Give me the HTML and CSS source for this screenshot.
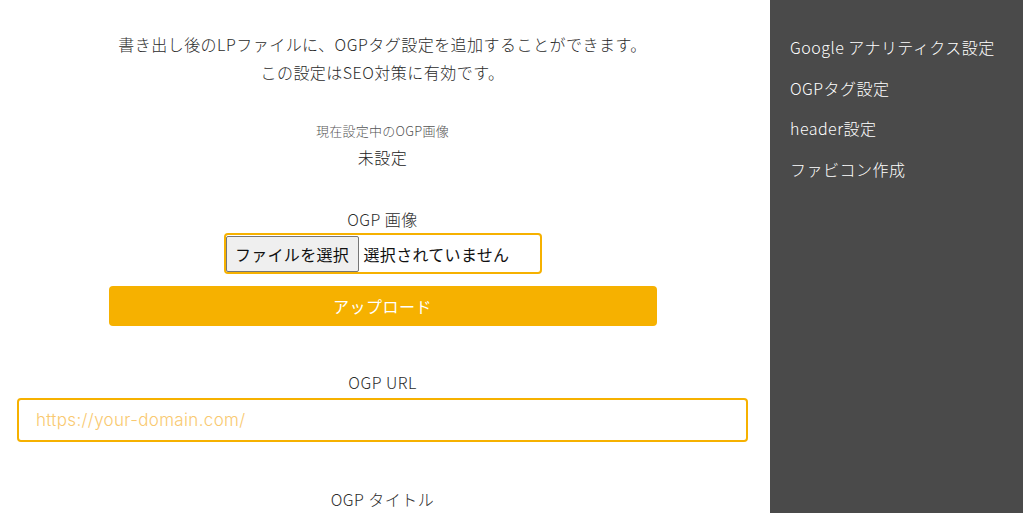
FILE: index.html
```html
<!DOCTYPE html>
<html lang="ja">
<head>
<meta charset="utf-8">
<link rel="stylesheet" href="styles.css">
</head>
<body>
<div class="page">
  <main class="main">
    <p class="intro">書き出し後のLPファイルに、OGPタグ設定を追加することができます。<br>この設定はSEO対策に有効です。</p>
    <div class="current">
      <div class="current-label">現在設定中のOGP画像</div>
      <div class="current-value">未設定</div>
    </div>
    <div class="field field-image">
      <div class="label">OGP 画像</div>
      <div class="file-box">
        <button class="file-btn" type="button">ファイルを選択</button>
        <span class="file-name">選択されていません</span>
      </div>
      <button class="upload" type="button">アップロード</button>
    </div>
    <div class="field field-url">
      <div class="label">OGP URL</div>
      <input class="text-input" type="text" placeholder="https://your-domain.com/">
    </div>
    <div class="field field-title">
      <div class="label">OGP タイトル</div>
    </div>
  </main>
  <aside class="side">
    <a class="side-item">Google アナリティクス設定</a>
    <a class="side-item">OGPタグ設定</a>
    <a class="side-item">header設定</a>
    <a class="side-item">ファビコン作成</a>
  </aside>
</div>
</body>
</html>
```
FILE: styles.css
```css
* { box-sizing: border-box; }
html, body { margin: 0; height: 100%; overflow: hidden; }
body {
  font-family: "Noto Sans CJK JP", "Noto Sans", sans-serif;
  font-weight: 300;
  color: #333;
  background: #fff;
  letter-spacing: 0.03em;
}
.page { display: flex; height: 513px; }
.main {
  width: 770px;
  padding: 0 22px 0 17px;
  display: flex;
  flex-direction: column;
  align-items: center;
  text-align: center;
}
.intro {
  margin: 30px 0 0;
  font-size: 16px;
  line-height: 28px;
  color: #2b2b2b;
}
.current { margin-top: 36px; }
.current-label { font-size: 13px; color: #555; line-height: 18px; letter-spacing: 0.02em; }
.current-value { font-size: 16px; line-height: 22px; margin-top: 6px; color: #222; }
.field { width: 100%; display: flex; flex-direction: column; align-items: center; }
.field-image { margin-top: 40px; }
.label { font-size: 16px; line-height: 22px; color: #2b2b2b; }
.file-box {
  margin-top: 3px;
  width: 318px;
  height: 41px;
  border: 2px solid #f6b100;
  border-radius: 4px;
  display: flex;
  align-items: center;
  text-align: left;
}
.file-btn {
  font-family: "Noto Sans CJK JP", sans-serif;
  font-weight: 400;
  font-size: 16px;
  letter-spacing: 0.02em;
  height: 36px;
  width: 133px;
  padding: 0;
  margin: 0;
  background: #efefef;
  border: 1px solid #767676;
  border-radius: 2px;
  color: #111;
}
.file-name { font-size: 16px; font-weight: 400; color: #111; margin-left: 5px; letter-spacing: 0.02em; }
.upload {
  margin-top: 12px;
  width: 548px;
  height: 40px;
  border: none;
  border-radius: 4px;
  background: #f6b100;
  color: #fff;
  font-family: "Noto Sans CJK JP", sans-serif;
  font-weight: 400;
  font-size: 16px;
  letter-spacing: 0.03em;
}
.field-url { margin-top: 45px; }
.text-input {
  margin-top: 5px;
  width: 100%;
  height: 44px;
  border: 2px solid #f6b100;
  border-radius: 4px;
  padding: 0 17px;
  font-family: Inter, "Noto Sans CJK JP", sans-serif;
  font-weight: 300;
  font-size: 17px;
  letter-spacing: 0.02em;
  outline: none;
}
.text-input::placeholder { color: #f9c970; }
.field-title { margin-top: 46px; }
.side {
  width: 253px;
  background: #4a4a4a;
  padding: 36px 0 0 20px;
  display: flex;
  flex-direction: column;
  gap: 18.5px;
}
.side-item { color: #fff; font-size: 16px; line-height: 22px; white-space: nowrap; }
```
